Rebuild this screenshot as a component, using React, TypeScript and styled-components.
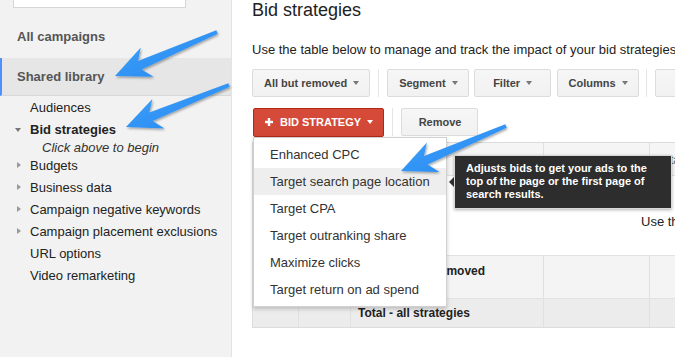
import React from "react";
import styled, { createGlobalStyle } from "styled-components";

const GlobalStyle = createGlobalStyle`
  html, body {
    margin: 0;
    padding: 0;
    background: #fff;
    overflow: hidden;
  }
  body {
    font-family: "Liberation Sans", Arial, sans-serif;
    color: #222;
  }
`;

const Page = styled.div`
  position: relative;
  display: flex;
  width: 675px;
  height: 357px;
  overflow: hidden;
`;

/* ---------- sidebar ---------- */

const Sidebar = styled.aside`
  flex: 0 0 231px;
  background: #f2f2f2;
  border-right: 1px solid #e4e4e4;
  font-size: 13px;
`;

const SearchBox = styled.div`
  height: 7px;
  margin: 0 45px 0 13px;
  background: #fff;
  border: 1px solid #d6d6d6;
  border-top: none;
`;

const NavHeading = styled.div<{ $active?: boolean }>`
  font-weight: bold;
  color: #555;
  padding-left: 17px;
  ${(p) =>
    p.$active
      ? `
    height: 37px;
    line-height: 37px;
    background: #e6e6e6;
    border-left: 2px solid #4d90fe;
    padding-left: 15px;
    border-bottom: 1px solid #d8d8d8;
  `
      : `
    padding-top: 17px;
    padding-bottom: 9px;
    line-height: 24px;
  `}
`;

const Tree = styled.ul`
  list-style: none;
  margin: 0;
  padding: 1px 0 0;
`;

const TreeItem = styled.li<{ $bold?: boolean }>`
  position: relative;
  line-height: 22px;
  padding-left: 30px;
  font-weight: ${(p) => (p.$bold ? "bold" : "normal")};
  color: #222;
  white-space: nowrap;
`;

const Hint = styled.li`
  line-height: 14px;
  padding-left: 42px;
  font-style: italic;
  color: #333;
`;

const Twisty = styled.span<{ $open?: boolean }>`
  position: absolute;
  left: ${(p) => (p.$open ? "15px" : "17px")};
  top: ${(p) => (p.$open ? "9px" : "7px")};
  width: 0;
  height: 0;
  ${(p) =>
    p.$open
      ? `
    border-left: 3.5px solid transparent;
    border-right: 3.5px solid transparent;
    border-top: 4px solid #777;
  `
      : `
    border-top: 3.5px solid transparent;
    border-bottom: 3.5px solid transparent;
    border-left: 4px solid #999;
  `}
`;

/* ---------- main ---------- */

const Main = styled.main`
  flex: 1;
  min-width: 0;
  padding-left: 20px;
  overflow: hidden;
`;

const Title = styled.h1`
  margin: 1px 0 0;
  font-size: 18px;
  line-height: 18px;
  font-weight: normal;
  color: #222;
`;

const Intro = styled.p`
  margin: 23px 0 0;
  font-size: 13px;
  line-height: 16px;
  color: #222;
  white-space: nowrap;
`;

const Toolbar = styled.div`
  display: flex;
  align-items: center;
  margin-top: 11px;
  height: 28px;
  white-space: nowrap;
`;

const ActionBar = styled(Toolbar)`
  position: relative;
  margin-top: 11px;
  padding-left: 1px;
`;

const Button = styled.button<{ $gap?: number }>`
  display: inline-flex;
  align-items: center;
  justify-content: center;
  flex: 0 0 auto;
  box-sizing: border-box;
  height: 28px;
  min-width: 77px;
  padding: 0 10px 0 11px;
  margin-right: ${(p) => p.$gap ?? 6}px;
  border: 1px solid #dcdcdc;
  border-radius: 2px;
  background: linear-gradient(#f6f6f6, #f1f1f1);
  font-family: inherit;
  font-size: 11px;
  font-weight: bold;
  color: #444;
  cursor: default;
`;

const PrimaryButton = styled(Button)`
  height: 29px;
  border-color: #b0281a;
  background: linear-gradient(#d64a38, #d14836);
  color: #fff;
`;

const Caret = styled.span<{ $light?: boolean }>`
  display: inline-block;
  width: 0;
  height: 0;
  margin-left: 6px;
  border-left: 3.5px solid transparent;
  border-right: 3.5px solid transparent;
  border-top: 4px solid ${(p) => (p.$light ? "#fff" : "#777")};
`;

const Divider = styled.span`
  flex: 0 0 1px;
  height: 28px;
  margin-right: 8px;
  background: #e5e5e5;
`;

const Menu = styled.ul`
  position: absolute;
  left: 1px;
  top: 29px;
  width: 194px;
  box-sizing: border-box;
  margin: 0;
  padding: 3px 0;
  list-style: none;
  background: #fff;
  border: 1px solid rgba(0, 0, 0, 0.18);
  box-shadow: 0 2px 4px rgba(0, 0, 0, 0.2);
  z-index: 2;
`;

const MenuItem = styled.li<{ $hover?: boolean }>`
  height: 27px;
  line-height: 27px;
  padding-left: 16px;
  font-size: 13px;
  color: #333;
  background: ${(p) => (p.$hover ? "#eeeeee" : "transparent")};
`;

const Tooltip = styled.div`
  position: absolute;
  left: 202px;
  top: 47px;
  width: 218px;
  box-sizing: border-box;
  padding: 6px 8px 7px 11px;
  background: #2d2d2d;
  border: 1px solid #d8d8d8;
  box-shadow: 0 1px 3px rgba(0, 0, 0, 0.3);
  color: #fff;
  font-size: 11px;
  font-weight: bold;
  line-height: 13px;
  white-space: normal;
  z-index: 3;

  &::before {
    content: "";
    position: absolute;
    left: -6px;
    top: 21px;
    border-top: 5px solid transparent;
    border-bottom: 5px solid transparent;
    border-right: 5px solid #2d2d2d;
  }
`;

const Table = styled.div`
  margin-top: 6px;
  width: 520px;
  border: 1px solid #dcdcdc;
  border-right: none;
  font-size: 12px;
`;

const Row = styled.div<{ $tone?: "head" | "sub" | "total" | "plain"; $height: number }>`
  display: grid;
  grid-template-columns: 46px 52px 193px 106px 1fr;
  height: ${(p) => p.$height}px;
  border-bottom: 1px solid #e2e2e2;
  background: ${(p) =>
    p.$tone === "head"
      ? "#f5f5f5"
      : p.$tone === "sub"
      ? "#f4f4f4"
      : p.$tone === "total"
      ? "#ececec"
      : "#fff"};
  &:last-child {
    border-bottom: none;
  }
`;

const Cell = styled.div<{ $pad?: number; $bold?: boolean }>`
  border-right: 1px solid #e0e0e0;
  padding: ${(p) => p.$pad ?? 8}px 0 0 ${(p) => (p.$bold ? 7 : 12)}px;
  font-weight: ${(p) => (p.$bold ? "bold" : "normal")};
  color: ${(p) => (p.$bold ? "#222" : "#666")};
  line-height: 14px;
  white-space: nowrap;
  overflow: hidden;
`;

const Message = styled.div`
  grid-column: 1 / -1;
  padding: 38px 0 0 388px;
  font-size: 13px;
  line-height: 16px;
  color: #222;
  white-space: nowrap;
`;

const Overlay = styled.svg`
  position: absolute;
  left: 0;
  top: 0;
  pointer-events: none;
  z-index: 10;
`;

type Pt = [number, number];

const arrowPoints = (tail: Pt, tip: Pt): string => {
  const dx = tip[0] - tail[0];
  const dy = tip[1] - tail[1];
  const len = Math.hypot(dx, dy);
  const ux = dx / len;
  const uy = dy / len;
  const nx = -uy;
  const ny = ux;
  const at = (back: number, side: number): string =>
    `${(tip[0] - ux * back + nx * side).toFixed(1)},${(tip[1] - uy * back + ny * side).toFixed(1)}`;
  return [
    at(len, 1.8),
    at(27, 4.6),
    at(35, 16),
    at(0, 0),
    at(35, -16),
    at(27, -4.6),
    at(len, -1.8),
  ].join(" ");
};

const arrows: [Pt, Pt][] = [
  [[217, 32], [115, 76]],
  [[229, 85], [126, 127]],
  [[506, 126], [401, 171]],
];

const Arrows = () => (
  <Overlay width="675" height="357" viewBox="0 0 675 357">
    <defs>
      <filter id="arrowShadow" x="-20%" y="-20%" width="140%" height="140%">
        <feDropShadow dx="1" dy="1.5" stdDeviation="1.2" floodColor="#000" floodOpacity="0.35" />
      </filter>
      <linearGradient id="arrowFill" x1="0" y1="0" x2="1" y2="1">
        <stop offset="0" stopColor="#45a3fa" />
        <stop offset="1" stopColor="#1f86f0" />
      </linearGradient>
    </defs>
    {arrows.map(([tail, tip], i) => (
      <polygon key={i} points={arrowPoints(tail, tip)} fill="url(#arrowFill)" filter="url(#arrowShadow)" />
    ))}
  </Overlay>
);

const PlusIcon = () => (
  <svg width="8" height="8" viewBox="0 0 8 8" style={{ marginRight: 7 }}>
    <rect x="2.8" y="0" width="2.4" height="8" fill="#fff" />
    <rect x="0" y="2.8" width="8" height="2.4" fill="#fff" />
  </svg>
);

const DownloadIcon = () => (
  <svg width="10" height="10" viewBox="0 0 10 10">
    <path d="M5 1v5M2.5 4L5 6.5 7.5 4M1 9h8" stroke="#777" strokeWidth="1.3" fill="none" />
  </svg>
);

const treeItems = [
  { label: "Budgets", twisty: true },
  { label: "Business data", twisty: true },
  { label: "Campaign negative keywords", twisty: true },
  { label: "Campaign placement exclusions", twisty: true },
  { label: "URL options", twisty: false },
  { label: "Video remarketing", twisty: false },
];

const strategies = [
  "Enhanced CPC",
  "Target search page location",
  "Target CPA",
  "Target outranking share",
  "Maximize clicks",
  "Target return on ad spend",
];

export default function App() {
  return (
    <Page>
      <GlobalStyle />
      <Sidebar>
        <SearchBox />
        <NavHeading>All campaigns</NavHeading>
        <NavHeading $active>Shared library</NavHeading>
        <Tree>
          <TreeItem>Audiences</TreeItem>
          <TreeItem $bold>
            <Twisty $open />
            Bid strategies
          </TreeItem>
          <Hint>Click above to begin</Hint>
          {treeItems.map((item) => (
            <TreeItem key={item.label}>
              {item.twisty && <Twisty />}
              {item.label}
            </TreeItem>
          ))}
        </Tree>
      </Sidebar>

      <Main>
        <Title>Bid strategies</Title>
        <Intro>Use the table below to manage and track the impact of your bid strategies on your campaigns.</Intro>

        <Toolbar>
          <Button $gap={8}>
            All but removed <Caret />
          </Button>
          <Divider />
          <Button $gap={5}>
            Segment <Caret />
          </Button>
          <Button>
            Filter <Caret />
          </Button>
          <Button $gap={7}>
            Columns <Caret />
          </Button>
          <Divider />
          <Button>
            <DownloadIcon />
          </Button>
        </Toolbar>

        <ActionBar>
          <PrimaryButton $gap={8}>
            <PlusIcon />
            BID STRATEGY <Caret $light />
          </PrimaryButton>
          <Divider />
          <Button>Remove</Button>

          <Menu>
            {strategies.map((s, i) => (
              <MenuItem key={s} $hover={i === 1}>
                {s}
              </MenuItem>
            ))}
          </Menu>

          <Tooltip>
            Adjusts bids to get your ads to the top of the page or the first page of search results.
          </Tooltip>
        </ActionBar>

        <Table>
          <Row $tone="head" $height={32}>
            <Cell />
            <Cell />
            <Cell />
            <Cell $pad={10}>Bid strategy</Cell>
            <Cell $pad={10}>Status</Cell>
          </Row>
          <Row $tone="plain" $height={79}>
            <Message>Use the + Bid strategy button to create a shared bid strategy.</Message>
          </Row>
          <Row $tone="sub" $height={42}>
            <Cell />
            <Cell />
            <Cell $bold $pad={8}>
              Total - all but removed
            </Cell>
            <Cell />
            <Cell />
          </Row>
          <Row $tone="total" $height={28}>
            <Cell />
            <Cell />
            <Cell $bold $pad={7}>
              Total - all strategies
            </Cell>
            <Cell />
            <Cell />
          </Row>
        </Table>
      </Main>

      <Arrows />
    </Page>
  );
}
